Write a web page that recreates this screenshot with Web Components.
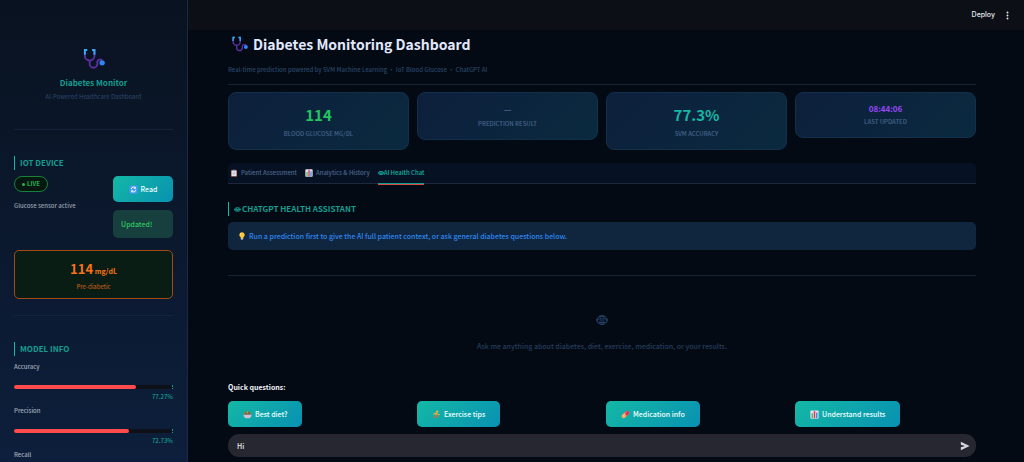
<!DOCTYPE html>
<html lang="en">
<head>
<meta charset="utf-8">
<title>Diabetes Monitoring Dashboard</title>
<style>
  :root {
    --teal: #14b8a6;
    --teal-dim: #129e90;
    --line: #15243a;
  }
  body {
    margin: 0;
    background: #030a14;
    color: #e2e8f0;
    font-family: "Noto Sans CJK SC", "Noto Sans", sans-serif;
    font-size: 7px;
    font-weight: 500;
    line-height: 12px;
  }
</style>
</head>
<body>
<dashboard-app></dashboard-app>

<script>
const ICONS = {
  stethoscope: `
    <path d="M5 2H3v6a5 5 0 0 0 10 0V2h-2" fill="none" stroke="#5b2f9e" stroke-width="2"/>
    <path d="M5.5 2H3v5M10.5 2H13v5" fill="none" stroke="#38a9f5" stroke-width="2"/>
    <path d="M8 13v3a4 4 0 0 0 8 1v-3a3 3 0 0 1 5-1" fill="none" stroke="#5b2f9e" stroke-width="2"/>
    <circle cx="21" cy="15.5" r="2.8" fill="#2f86f6"/>`,
  robot: `
    <g fill="none" stroke="currentColor" stroke-width="1.6">
      <ellipse cx="12" cy="12" rx="10" ry="9"/>
      <path d="M6 5h12M3 10h18M5 17h14M8 20h8"/>
      <path d="M7 14h10"/>
    </g>
    <path d="M7 7h3v2H7zM14 7h3v2h-3zM1 10h2v5H1zM21 10h2v5h-2z" fill="currentColor"/>`,
  robotSmall: `
    <ellipse cx="12" cy="12" rx="10" ry="6.5" fill="none" stroke="currentColor" stroke-width="3"/>
    <path d="M1 12h22M7 8h3M14 8h3M8 15h8" stroke="currentColor" stroke-width="3"/>`,
  clipboard: `
    <rect x="3" y="3" width="18" height="20" rx="2" fill="#a8694f"/>
    <rect x="5" y="5" width="14" height="16" fill="#e6e3ee"/>
    <path d="M8 2h8v4H8z" fill="#8d93a8"/>
    <path d="M8 10h8M8 13h8M8 16h6" stroke="#a7a6bb" stroke-width="1.5"/>`,
  chart: `
    <rect x="1" y="1" width="22" height="22" rx="2" fill="#e3e1ec"/>
    <rect x="4" y="9" width="4" height="13" fill="#4fbf63"/>
    <rect x="10" y="3" width="4" height="19" fill="#e0365f"/>
    <rect x="16" y="7" width="4" height="15" fill="#3c8fe8"/>`,
  bulb: `
    <path d="M12 1a8 8 0 0 0-4 15v2h8v-2a8 8 0 0 0-4-15z" fill="#fcc53c"/>
    <path d="M9 4a5 5 0 0 0-2 5l3-1z" fill="#fff0a8"/>
    <path d="M8 18h8v3l-2 2h-4l-2-2z" fill="#b6b5c3"/>`,
  refresh: `
    <rect x="1" y="1" width="22" height="22" rx="3" fill="#4699ef"/>
    <path d="M6 11a6 6 0 0 1 11-3M18 13a6 6 0 0 1-11 3" fill="none" stroke="#fff" stroke-width="2.5"/>
    <path d="M18 4v6h-6zM6 20v-6h6z" fill="#fff"/>`,
  salad: `
    <path d="M3 11a5 5 0 0 1 5-7 5 5 0 0 1 8 0 5 5 0 0 1 5 7z" fill="#4f9b42"/>
    <circle cx="8" cy="8" r="3" fill="#d9414a"/>
    <circle cx="16" cy="8" r="3" fill="#a94457"/>
    <circle cx="12" cy="6" r="2" fill="#91ca54"/>
    <path d="M1 11h22c0 7-4 11-8 11H9c-4 0-8-4-8-11z" fill="#c9c4d0"/>
    <path d="M1 11h22v2H1z" fill="#7f6672"/>`,
  runner: `
    <circle cx="14" cy="4" r="3" fill="#f5b942"/>
    <path d="M13 7l-3 7" stroke="#f39a2d" stroke-width="5"/>
    <path d="M12 8L6 9l-2 4M14 9l3 4 4-1" fill="none" stroke="#f5b942" stroke-width="2.5"/>
    <path d="M10 14l5 3-1 5M9 15l-2 4-5 1" fill="none" stroke="#b97b3f" stroke-width="3"/>`,
  pill: `
    <g transform="rotate(-42 12 12)">
      <rect x="0" y="7" width="24" height="10" rx="5" fill="#ffad5c"/>
      <path d="M12 7h7a5 5 0 0 1 0 10h-7z" fill="#df2f5c"/>
      <path d="M4 9h15" stroke="#ffd3b0" stroke-width="1.5"/>
    </g>`,
  send: `<path d="M2 2l21 10L2 22v-7l10-3-10-3z" fill="currentColor"/>`,
  dots: `
    <g fill="currentColor">
      <circle cx="12" cy="4" r="2.5"/><circle cx="12" cy="12" r="2.5"/><circle cx="12" cy="20" r="2.5"/>
    </g>`
};

// <ui-icon name="chart" size="8">
class UiIcon extends HTMLElement {
  connectedCallback() {
    const size = this.getAttribute("size") || "8";
    this.attachShadow({ mode: "open" }).innerHTML = `
      <style>
        :host { display: inline-block; flex: none; width: ${size}px; height: ${size}px; }
        svg { display: block; width: 100%; height: 100%; }
      </style>
      <svg viewBox="0 0 24 24" aria-hidden="true">${ICONS[this.getAttribute("name")]}</svg>
    `;
  }
}

class SectionTitle extends HTMLElement {
  connectedCallback() {
    this.attachShadow({ mode: "open" }).innerHTML = `
      <style>
        :host { display: block; }
        h2 {
          display: flex;
          align-items: center;
          gap: 1px;
          margin: 0;
          padding-left: 5px;
          border-left: 1px solid var(--teal);
          color: var(--teal-dim);
          font-size: 8px;
          line-height: 14px;
          font-weight: 700;
          text-transform: uppercase;
        }
      </style>
      <h2><slot></slot></h2>
    `;
  }
}

class GradientButton extends HTMLElement {
  connectedCallback() {
    this.attachShadow({ mode: "open" }).innerHTML = `
      <style>
        :host { display: block; }
        button {
          display: flex;
          align-items: center;
          justify-content: center;
          gap: 3px;
          width: var(--button-width, auto);
          height: 26px;
          padding: 0 15px;
          border: 0;
          border-radius: 5px;
          background: linear-gradient(135deg, #14b8a6, #0891b2);
          color: #f0fffe;
          font: inherit;
          white-space: nowrap;
        }
      </style>
      <button type="button">
        <ui-icon name="${this.getAttribute("icon")}" size="9"></ui-icon><slot></slot>
      </button>
    `;
  }
}

class ModelMetric extends HTMLElement {
  connectedCallback() {
    const label = this.getAttribute("label");
    const value = this.getAttribute("value");
    const bar = value ? `
      <div class="track"><progress id="bar" max="100" value="${value}"></progress></div>
      <div class="value">${value}%</div>
    ` : "";
    this.attachShadow({ mode: "open" }).innerHTML = `
      <style>
        :host { display: block; color: #a3acba; font-size: 6px; }
        label { display: block; }
        .track { margin-top: 12px; border-right: 1px dotted var(--teal-dim); }
        progress {
          display: block;
          appearance: none;
          width: 100%;
          height: 4px;
          border: 0;
        }
        progress::-webkit-progress-bar { background: #0e1117; border-radius: 2px; }
        progress::-webkit-progress-value { background: #ff4b4b; border-radius: 2px; }
        .value { padding-top: 2px; color: var(--teal-dim); text-align: right; }
      </style>
      <label for="bar">${label}</label>
      ${bar}
    `;
  }
}

class SidePanel extends HTMLElement {
  connectedCallback() {
    this.attachShadow({ mode: "open" }).innerHTML = `
      <style>
        :host {
          box-sizing: border-box;
          flex: 0 0 188px;
          padding: 48px 14px 0;
          overflow: hidden;
          border-right: 1px solid #1a2a42;
          background: linear-gradient(180deg, #091220, #0d1f3c);
        }
        .brand { text-align: center; }
        .brand ui-icon { display: block; margin: 0 auto; }
        .brand h1 { margin: 6px 0 2px; color: var(--teal-dim); font-size: 8px; line-height: 12px; }
        .brand p { margin: 0; color: #2e486a; font-size: 6px; font-weight: 400; }
        hr { margin: 0; border: 0; border-top: 1px solid var(--line); }
        .brand + hr { margin: 26px 0; }
        .device { display: flex; justify-content: space-between; margin-top: 6px; }
        .live {
          display: inline-flex;
          align-items: center;
          gap: 2px;
          height: 14px;
          padding: 0 7px;
          border: 1px solid #16823c;
          border-radius: 9px;
          background: #06170f;
          color: #20b455;
          font-size: 6px;
          font-weight: 700;
        }
        .dot { width: 3px; height: 3px; border-radius: 50%; background: currentColor; }
        .device p { margin: 8px 0 0; color: #98a2b1; font-size: 6px; }
        .actions { width: 60px; --button-width: 100%; }
        .alert {
          margin-top: 8px;
          padding: 8px;
          border-radius: 5px;
          background: #173f3e;
          color: #31c663;
        }
        .reading {
          margin: 12px 0 16px;
          padding: 10px 0 5px;
          border: 1px solid #a24a12;
          border-radius: 5px;
          background: #0a1d14;
          color: #f97316;
          text-align: center;
        }
        .reading strong { font-size: 13px; line-height: 16px; }
        .reading small { font-size: 7px; font-weight: 700; }
        .reading p { margin: 4px 0 0; color: #cf6418; font-size: 6px; font-weight: 400; }
        section-title.info { margin: 26px 0 5px; }
        .metrics { display: flex; flex-direction: column; gap: 2px; }
      </style>
      <div class="brand">
        <ui-icon name="stethoscope" size="23"></ui-icon>
        <h1>Diabetes Monitor</h1>
        <p>AI-Powered Healthcare Dashboard</p>
      </div>
      <hr>
      <section-title>IoT Device</section-title>
      <div class="device">
        <div>
          <span class="live"><span class="dot"></span>LIVE</span>
          <p>Glucose sensor active</p>
        </div>
        <div class="actions">
          <gradient-button icon="refresh">Read</gradient-button>
          <div class="alert" role="status">Updated!</div>
        </div>
      </div>
      <div class="reading">
        <strong>114</strong> <small>mg/dL</small>
        <p>Pre-diabetic</p>
      </div>
      <hr>
      <section-title class="info">Model Info</section-title>
      <div class="metrics">
        <model-metric label="Accuracy" value="77.27"></model-metric>
        <model-metric label="Precision" value="72.73"></model-metric>
        <model-metric label="Recall"></model-metric>
      </div>
    `;
  }
}

class TopBar extends HTMLElement {
  connectedCallback() {
    this.attachShadow({ mode: "open" }).innerHTML = `
      <style>
        :host {
          display: flex;
          flex: none;
          align-items: center;
          justify-content: flex-end;
          gap: 8px;
          height: 30px;
          padding-right: 12px;
          background: #0c0f16;
        }
        button {
          padding: 0;
          border: 0;
          background: none;
          color: #e6e8ee;
          font: 500 7px/10px Inter, sans-serif;
        }
        ui-icon { display: block; }
      </style>
      <button type="button">Deploy</button>
      <button type="button" aria-label="Menu"><ui-icon name="dots" size="9"></ui-icon></button>
    `;
  }
}

// size: "large", "medium" or "small" sets the scale of the value
class MetricCard extends HTMLElement {
  connectedCallback() {
    this.attachShadow({ mode: "open" }).innerHTML = `
      <style>
        :host { display: block; text-align: center; }
        div {
          padding: 11px 10px 9px;
          border: 1px solid #12304a;
          border-radius: 8px;
          background: linear-gradient(135deg, #0d1f3c, #0a2a3f);
        }
        p { margin: 0; }
        .value { color: ${this.getAttribute("color")}; font-weight: 700; }
        .large { font-size: 15px; line-height: 22px; }
        .medium { font-size: 9px; line-height: 12px; }
        .small { font-size: 8px; line-height: 10px; }
        .label {
          padding-top: 2px;
          color: #46658c;
          font-size: 6px;
          text-transform: uppercase;
        }
      </style>
      <div>
        <p class="value ${this.getAttribute("size")}">${this.getAttribute("value")}</p>
        <p class="label">${this.getAttribute("label")}</p>
      </div>
    `;
  }
}

class TabBar extends HTMLElement {
  connectedCallback() {
    this.attachShadow({ mode: "open" }).innerHTML = `
      <style>
        :host {
          display: flex;
          gap: 8px;
          padding: 0 2px;
          border-bottom: 1px solid #1d283c;
          border-radius: 5px 5px 0 0;
          background: #071124;
        }
        button {
          display: flex;
          align-items: center;
          gap: 3px;
          height: 21px;
          margin-bottom: -1px;
          padding: 0;
          border: 0;
          border-bottom: 1px solid transparent;
          background: none;
          color: #4c678c;
          font: inherit;
          font-size: 6px;
          white-space: nowrap;
        }
        button[aria-selected="true"] {
          gap: 0;
          border-color: var(--teal-dim);
          box-shadow: 0 1px #d94b45;
          color: var(--teal);
        }
      </style>
      <button type="button" role="tab" aria-selected="false"><ui-icon name="clipboard"></ui-icon>Patient Assessment</button>
      <button type="button" role="tab" aria-selected="false"><ui-icon name="chart"></ui-icon>Analytics &amp; History</button>
      <button type="button" role="tab" aria-selected="true"><ui-icon name="robotSmall" size="6"></ui-icon>AI Health Chat</button>
    `;
    this.setAttribute("role", "tablist");
  }
}

class ChatInput extends HTMLElement {
  connectedCallback() {
    this.attachShadow({ mode: "open" }).innerHTML = `
      <style>
        :host { display: block; }
        form {
          display: flex;
          align-items: center;
          height: 23px;
          padding: 0 6px 0 9px;
          border-radius: 11px;
          background: #262730;
        }
        input {
          flex: 1;
          min-width: 0;
          padding: 0;
          border: 0;
          outline: 0;
          background: none;
          color: #e8eaf0;
          font: inherit;
        }
        button { padding: 0; border: 0; background: none; color: #d3d6df; }
        ui-icon { display: block; }
      </style>
      <form>
        <input type="text" value="Hi" aria-label="Message">
        <button type="button" aria-label="Send"><ui-icon name="send" size="10"></ui-icon></button>
      </form>
    `;
  }
}

class DashboardApp extends HTMLElement {
  connectedCallback() {
    this.attachShadow({ mode: "open" }).innerHTML = `
      <style>
        :host { display: flex; height: 100vh; overflow: hidden; }
        .page { display: flex; flex: 1; flex-direction: column; min-width: 0; }
        main { flex: 1; min-height: 0; padding: 4px 48px 0 40px; overflow: hidden; }
        h1 {
          display: flex;
          align-items: center;
          gap: 5px;
          margin: 0;
          padding-left: 3px;
          color: #e2e8ff;
          font-size: 14px;
          line-height: 20px;
        }
        .subtitle { margin: 10px 0 8px; color: #294668; font-size: 6px; }
        hr { margin: 0; border: 0; border-top: 1px solid var(--line); }
        .columns {
          display: grid;
          grid-template-columns: repeat(4, 1fr);
          align-items: start;
          justify-items: start;
          gap: 8px;
        }
        .metrics { justify-items: stretch; margin: 7px 0 13px; }
        section-title { margin: 18px 0 6px; }
        .hint {
          display: flex;
          align-items: center;
          gap: 3px;
          margin-bottom: 25px;
          padding: 8px 10px;
          border-radius: 5px;
          background: #10263f;
          color: #2f86ee;
        }
        .empty { padding: 38px 0 29px; color: #253d5c; text-align: center; }
        .empty ui-icon { display: block; margin: 0 auto 14px; color: #2b4a74; }
        .empty p { margin: 0; }
        .quick { margin: 0 0 8px; color: #f1f3f8; font-weight: 700; }
        chat-input { margin-top: 7px; }
      </style>
      <side-panel></side-panel>
      <div class="page">
        <top-bar></top-bar>
        <main>
          <h1><ui-icon name="stethoscope" size="17"></ui-icon>Diabetes Monitoring Dashboard</h1>
          <p class="subtitle">Real-time prediction powered by SVM Machine Learning · IoT Blood Glucose · ChatGPT AI</p>
          <hr>
          <div class="columns metrics">
            <metric-card size="large" value="114" label="Blood Glucose mg/dL" color="#22c55e"></metric-card>
            <metric-card size="medium" value="—" label="Prediction Result" color="#3d5c82"></metric-card>
            <metric-card size="large" value="77.3%" label="SVM Accuracy" color="#14b8a6"></metric-card>
            <metric-card size="small" value="08:44:06" label="Last Updated" color="#9747f5"></metric-card>
          </div>
          <tab-bar></tab-bar>
          <section-title><ui-icon name="robotSmall" size="7"></ui-icon>ChatGPT Health Assistant</section-title>
          <div class="hint"><ui-icon name="bulb"></ui-icon>Run a prediction first to give the AI full patient context, or ask general diabetes questions below.</div>
          <hr>
          <div class="empty">
            <ui-icon name="robot" size="12"></ui-icon>
            <p>Ask me anything about diabetes, diet, exercise, medication, or your results.</p>
          </div>
          <p class="quick">Quick questions:</p>
          <div class="columns">
            <gradient-button icon="salad">Best diet?</gradient-button>
            <gradient-button icon="runner">Exercise tips</gradient-button>
            <gradient-button icon="pill">Medication info</gradient-button>
            <gradient-button icon="chart">Understand results</gradient-button>
          </div>
          <chat-input></chat-input>
        </main>
      </div>
    `;
  }
}

customElements.define("ui-icon", UiIcon);
customElements.define("section-title", SectionTitle);
customElements.define("gradient-button", GradientButton);
customElements.define("model-metric", ModelMetric);
customElements.define("side-panel", SidePanel);
customElements.define("top-bar", TopBar);
customElements.define("metric-card", MetricCard);
customElements.define("tab-bar", TabBar);
customElements.define("chat-input", ChatInput);
customElements.define("dashboard-app", DashboardApp);
</script>
</body>
</html>
